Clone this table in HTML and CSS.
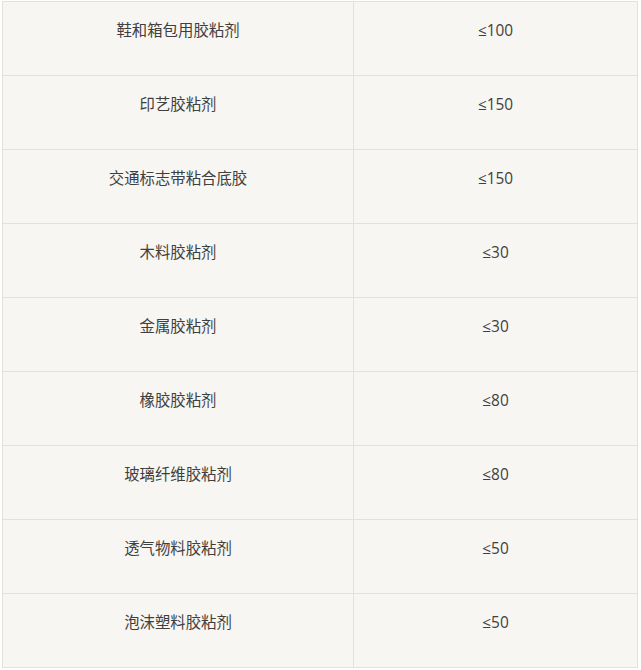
FILE: index.html
```html
<!DOCTYPE html>
<html lang="zh">
<head>
<meta charset="utf-8">
<link rel="stylesheet" href="styles.css">
</head>
<body>
<table class="spec">
  <tbody>
    <tr><td>鞋和箱包用胶粘剂</td><td>≤100</td></tr>
    <tr><td>印艺胶粘剂</td><td>≤150</td></tr>
    <tr><td>交通标志带粘合底胶</td><td>≤150</td></tr>
    <tr><td>木料胶粘剂</td><td>≤30</td></tr>
    <tr><td>金属胶粘剂</td><td>≤30</td></tr>
    <tr><td>橡胶胶粘剂</td><td>≤80</td></tr>
    <tr><td>玻璃纤维胶粘剂</td><td>≤80</td></tr>
    <tr><td>透气物料胶粘剂</td><td>≤50</td></tr>
    <tr><td>泡沫塑料胶粘剂</td><td>≤50</td></tr>
  </tbody>
</table>
</body>
</html>
```

FILE: styles.css
```css
html, body {
  margin: 0;
  padding: 0;
  background: #ffffff;
}
body {
  padding: 1px 0 0 2px;
  font-family: "Open Sans", "Noto Sans CJK SC", sans-serif;
  color: #3f3f3f;
}
.spec {
  border-collapse: collapse;
  width: 636px;
  table-layout: fixed;
  background: #f7f6f2;
}
.spec td {
  border: 1px solid #e2e1dd;
  height: 74px;
  box-sizing: border-box;
  padding: 0 0 15px 0;
  text-align: center;
  font-size: 15.4px;
  line-height: 20px;
}
.spec td:first-child {
  width: 351px;
}
```
